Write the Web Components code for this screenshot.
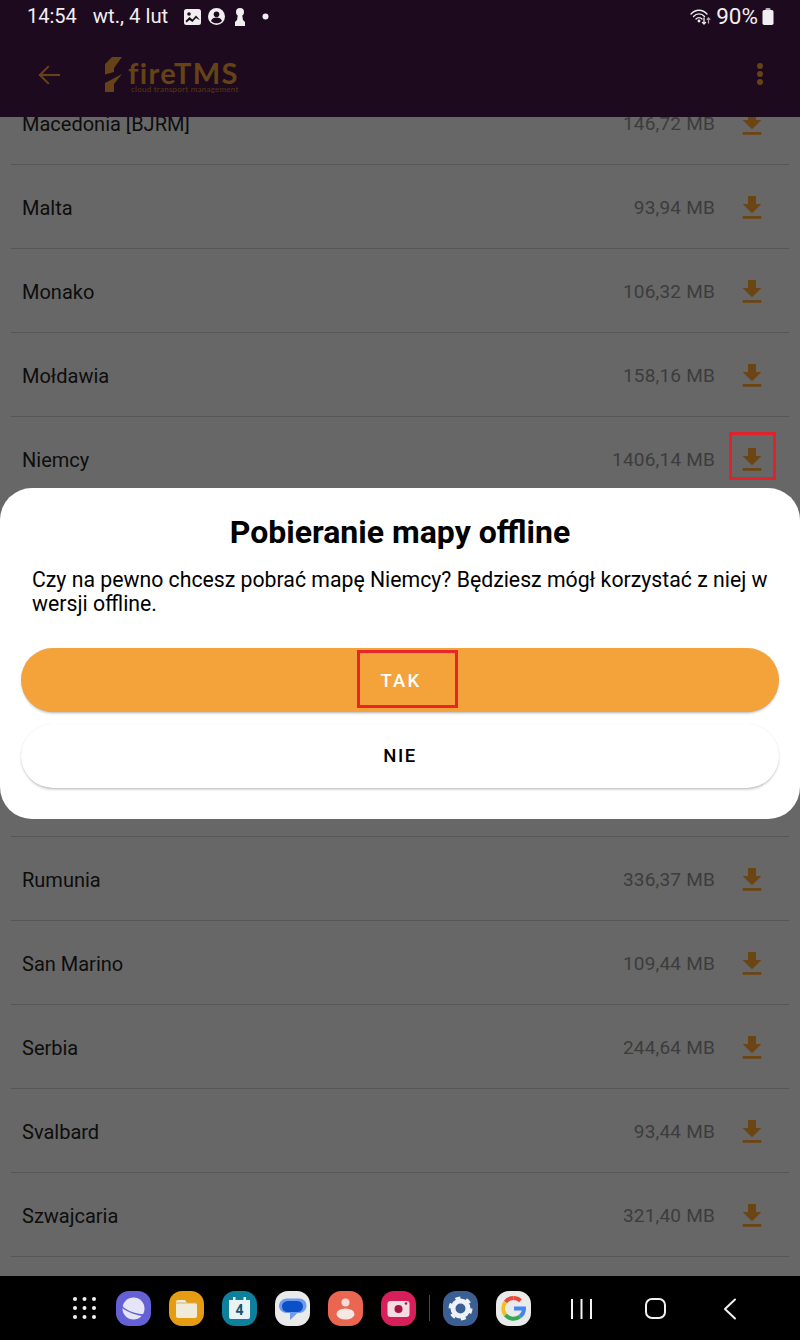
<!DOCTYPE html>
<html lang="pl">
<head>
<meta charset="utf-8">
<title>fireTMS</title>
<style>
    html, body { margin: 0; padding: 0; background: #676767; }
    body { font-family: 'Roboto', 'Liberation Sans', sans-serif; }
</style>
</head>
<body>
<phone-screen>
    <status-bar slot="top"></status-bar>
    <app-bar slot="top"></app-bar>

    <map-list>
        <map-row name="Macedonia [BJRM]" size="146,72 MB"></map-row>
        <map-row name="Malta" size="93,94 MB"></map-row>
        <map-row name="Monako" size="106,32 MB"></map-row>
        <map-row name="Mołdawia" size="158,16 MB"></map-row>
        <map-row name="Niemcy" size="1406,14 MB" marked></map-row>
        <map-row covered></map-row>
        <map-row covered></map-row>
        <map-row covered></map-row>
        <map-row covered></map-row>
        <map-row name="Rumunia" size="336,37 MB"></map-row>
        <map-row name="San Marino" size="109,44 MB"></map-row>
        <map-row name="Serbia" size="244,64 MB"></map-row>
        <map-row name="Svalbard" size="93,44 MB"></map-row>
        <map-row name="Szwajcaria" size="321,40 MB"></map-row>
    </map-list>

    <dock-bar slot="bottom"></dock-bar>

    <offline-dialog slot="overlay" heading="Pobieranie mapy offline">
        Czy na pewno chcesz pobrać mapę Niemcy? Będziesz mógł korzystać z niej w wersji offline.
        <sheet-button slot="actions" primary marked>TAK</sheet-button>
        <sheet-button slot="actions">NIE</sheet-button>
    </offline-dialog>
</phone-screen>

<script>
class PhoneScreen extends HTMLElement {
    constructor() {
        super();
        this.attachShadow({ mode: 'open' });
        this.shadowRoot.innerHTML = `
            <style>
                :host {
                    display: flex;
                    flex-direction: column;
                    position: relative;
                    width: 800px;
                    height: 1340px;
                    overflow: hidden;
                }
                .middle { flex: 1; min-height: 0; overflow: hidden; }
            </style>
            <slot name="top"></slot>
            <div class="middle"><slot></slot></div>
            <slot name="bottom"></slot>
            <slot name="overlay"></slot>
        `;
    }
}

class StatusBar extends HTMLElement {
    constructor() {
        super();
        this.attachShadow({ mode: 'open' });
        this.shadowRoot.innerHTML = `
            <style>
                :host {
                    display: flex;
                    align-items: center;
                    height: 33px;
                    padding: 0 27px;
                    background: #1e0a1e;
                    color: #f1eef1;
                    font: 400 20px/33px 'Roboto', sans-serif;
                }
                .date { margin-left: 16px; font-size: 20.300px; }
                .icons { display: flex; align-items: center; margin-left: 16px; }
                svg { display: block; }
                .right { margin-left: auto; display: flex; align-items: center; margin-right: -1px; }
                .pct { margin: 0 4px 0 5px; font-size: 22.500px; }
            </style>
            <span>14:54</span>
            <span class="date">wt., 4 lut</span>
            <div class="icons">
                <svg width="17" height="16" viewBox="0 0 17 16" fill="#f1eef1"><path d="M2.5 0h12A2.5 2.5 0 0 1 17 2.500v11a2.500 2.500 0 0 1-2.500 2.500h-12A2.500 2.500 0 0 1 0 13.500v-11A2.500 2.500 0 0 1 2.500 0z"/><circle cx="5" cy="5" r="1.800" fill="#1e0a1e"/><path d="M1.500 12l4-4 3 2.500 3.500-4 3.500 4V11l-3.500-2-3.500 4-3-2-3 2.500z" fill="#1e0a1e"/></svg>
                <svg style="margin-left:7px" width="17" height="17" viewBox="0 0 17 17"><circle cx="8.500" cy="8.500" r="8.500" fill="#f1eef1"/><circle cx="8.500" cy="6.300" r="2.800" fill="#1e0a1e"/><path d="M3 13c1-2.600 3-3.400 5.500-3.400S13 10.400 14 13c-1.400 1.500-3.400 2.300-5.500 2.300S4.400 14.500 3 13z" fill="#1e0a1e"/></svg>
                <svg style="margin-left:9px" width="12" height="18" viewBox="0 0 12 18" fill="#f1eef1"><circle cx="6" cy="4" r="4"/><path d="M4 6h4l1 6 2 2v4H1v-4l2-2z"/></svg>
                <svg style="margin-left:16px" width="7" height="7" viewBox="0 0 7 7"><circle cx="3.500" cy="3.500" r="3" fill="#f1eef1"/></svg>
            </div>
            <div class="right">
                <svg width="21" height="18" viewBox="0 0 21 18" fill="none" stroke="#f1eef1" stroke-width="1.300" stroke-linecap="round"><path d="M1 6c4.400-5 11.600-5 16 0"/><path d="M3.500 8.500c3-3.400 8-3.400 11 0"/><path d="M6 11c1.600-1.800 4.400-1.800 6 0"/><circle cx="9" cy="13" r=".8" fill="#f1eef1"/><path d="M14 10v6m-1.600-1.600L14 16l1.600-1.600"/><path d="M18.500 15V10m-1.300 1.300l1.300-1.300 1.300 1.300" stroke="#a9a3a9"/></svg>
                <span class="pct">90%</span>
                <svg width="12" height="17" viewBox="0 0 12 17" fill="#f1eef1"><rect x="3.500" y="0" width="5" height="2.500" rx="1" fill="#b7b2b7"/><rect x="0.500" y="2" width="11" height="15" rx="1.800"/></svg>
            </div>
        `;
    }
}

class AppBar extends HTMLElement {
    constructor() {
        super();
        this.attachShadow({ mode: 'open' });
        this.shadowRoot.innerHTML = `
            <style>
                :host {
                    display: flex;
                    align-items: center;
                    height: 84px;
                    padding: 0 36px 0 38px;
                    box-sizing: border-box;
                    background: #1e0a1e;
                    color: #654317;
                }
                svg { display: block; }
                .logo { display: flex; margin-left: 44px; }
                .words { margin-left: 5px; padding-top: 3px; display: flex; flex-direction: column; }
                .name {
                    font: 700 29px/26px 'Lato', sans-serif;
                    letter-spacing: 1.400px;
                }
                .tag {
                    font: 400 8px/9px 'Lato', sans-serif;
                    color: #553816;
                    margin: -1px 0 0 3px;
                    white-space: nowrap;
                    letter-spacing: .25px;
                }
                .more { margin-left: auto; margin-top: -2px; }
            </style>
            <svg width="22" height="20" viewBox="0 0 23 20" fill="none" stroke="#654317" stroke-width="2.200" stroke-linecap="square"><path d="M2 10h20"/><path d="M10.500 1.500L2 10l8.500 8.500"/></svg>
            <div class="logo">
                <svg width="19" height="37" viewBox="0 0 19 37" fill="#654317"><path d="M8 0h10L10 11v4l-9 2.500V7z"/><path d="M1 26l17-9-8 10v8H1z"/></svg>
                <div class="words">
                    <span class="name">fireTMS</span>
                    <span class="tag">cloud transport management</span>
                </div>
            </div>
            <svg class="more" width="8" height="24" viewBox="0 0 8 24" fill="#654317"><circle cx="4" cy="4" r="3"/><circle cx="4" cy="12" r="3"/><circle cx="4" cy="20" r="3"/></svg>
        `;
    }
}

class MapList extends HTMLElement {
    constructor() {
        super();
        this.attachShadow({ mode: 'open' });
        this.shadowRoot.innerHTML = `
            <style>
                :host { display: block; margin-top: -36px; background: #676767; }
            </style>
            <slot></slot>
        `;
    }
}

class MapRow extends HTMLElement {
    constructor() {
        super();
        this.attachShadow({ mode: 'open' });
    }

    connectedCallback() {
        const name = this.getAttribute('name') || '';
        const size = this.getAttribute('size') || '';
        const covered = this.hasAttribute('covered');
        this.shadowRoot.innerHTML = `
            <style>
                :host { display: block; padding: 0 11px; }
                .row {
                    display: flex;
                    align-items: center;
                    box-sizing: border-box;
                    height: 84px;
                    padding: 2px 11px 0;
                    border-bottom: 1px solid #565656;
                    font-size: 20px;
                    color: #0d0d0d;
                }
                .size { margin-left: auto; color: #3c3c3c; font-size: 19px; letter-spacing: .2px; }
                .icon {
                    position: relative;
                    width: 32px;
                    height: 32px;
                    margin: 0 10px 0 21px;
                }
                svg { display: block; }
                :host([marked]) .icon::after {
                    content: '';
                    position: absolute;
                    left: -7px;
                    top: -12px;
                    width: 41px;
                    height: 42px;
                    border: 3px solid #e0222a;
                }
            </style>
            <div class="row">
                ${covered ? '' : `
                <span>${name}</span>
                <span class="size">${size}</span>
                <span class="icon">
                    <svg width="32" height="32" viewBox="0 0 24 24" fill="#6b4514"><path d="M19 9h-4V3H9v6H5l7 7 7-7zM5 18v2h14v-2H5z"/></svg>
                </span>`}
            </div>
        `;
    }
}

class OfflineDialog extends HTMLElement {
    constructor() {
        super();
        this.attachShadow({ mode: 'open' });
    }

    connectedCallback() {
        this.shadowRoot.innerHTML = `
            <style>
                :host {
                    display: block;
                    position: absolute;
                    left: 0;
                    right: 0;
                    top: 488px;
                    height: 331px;
                    box-sizing: border-box;
                    padding: 26px 21px 0;
                    background: #fff;
                    border-radius: 32px;
                    color: #000;
                }
                h2 {
                    margin: 0;
                    text-align: center;
                    font: 700 32px/36px 'Roboto', sans-serif;
                }
                p {
                    margin: 18px 0 0 11px;
                    font: 400 21.250px/24px 'Roboto', sans-serif;
                }
                .actions { display: flex; flex-direction: column; gap: 12px; margin-top: 32px; }
            </style>
            <h2>${this.getAttribute('heading')}</h2>
            <p><slot></slot></p>
            <div class="actions"><slot name="actions"></slot></div>
        `;
    }
}

class SheetButton extends HTMLElement {
    constructor() {
        super();
        this.attachShadow({ mode: 'open' });
        this.shadowRoot.innerHTML = `
            <style>
                :host {
                    display: flex;
                    align-items: center;
                    justify-content: center;
                    position: relative;
                    box-sizing: border-box;
                    height: 64px;
                    padding-top: 1px;
                    border-radius: 32px;
                    background: #fff;
                    color: #000;
                    font: 500 18.500px/1 'Roboto', sans-serif;
                    letter-spacing: 1.600px;
                    box-shadow: 0 2px 3px -1px rgba(0,0,0,.3), 0 0 1px rgba(0,0,0,.12);
                }
                :host([primary]) { background: #f4a33b; color: #fff; letter-spacing: 2.200px; padding-left: 2px; padding-top: 2px; }
                :host([marked])::after {
                    content: '';
                    position: absolute;
                    left: 336px;
                    top: 2px;
                    width: 95px;
                    height: 52px;
                    border: 3px solid #e8262a;
                }
            </style>
            <slot></slot>
        `;
    }
}

const DOCK_ICONS = {
    internet: `<rect width="35" height="35" rx="13" fill="#6461d6"/><circle cx="17.500" cy="17.500" r="11" fill="#e6e4f7"/><path d="M3.500 12c5 7 16 12 28 11-1 2-3 2-5 2-9-1-19-6-24-11z" fill="#6461d6"/>`,
    files: `<rect width="35" height="35" rx="13" fill="#e59c12"/><path d="M7 11a2 2 0 0 1 2-2h7l2 3h8a2 2 0 0 1 2 2v11a2 2 0 0 1-2 2H9a2 2 0 0 1-2-2z" fill="#f0ead9"/><path d="M7 12h21" stroke="#dcb35e" stroke-width="1"/>`,
    calendar: `<rect width="35" height="35" rx="13" fill="#0e7f9d"/><path d="M7 9h21v17a2 2 0 0 1-2 2H9a2 2 0 0 1-2-2z" fill="#e9f2f4"/><rect x="11" y="6" width="2.500" height="5" fill="#e9f2f4"/><rect x="21.500" y="6" width="2.500" height="5" fill="#e9f2f4"/>`,
    messages: `<rect width="35" height="35" rx="13" fill="#eaeaea"/><path d="M13 4.500h12c4.500 0 7.500 3 7.500 7s-3 7.500-7.500 7.500h-1.500L16 26v-7h-3c-4.500 0-8-3-8-7s3.500-7.500 8-7.500z" fill="#6c9bf0" transform="translate(-1,3)"/><rect x="7" y="10" width="21" height="11" rx="5.500" fill="#0c50c8"/>`,
    contacts: `<rect width="35" height="35" rx="13" fill="#ea6650"/><circle cx="17.500" cy="11.500" r="4" fill="#f7dbd4"/><ellipse cx="17.500" cy="23" rx="9" ry="5.500" fill="#f7e7e2"/>`,
    camera: `<rect width="35" height="35" rx="13" fill="#d91f5b"/><rect x="6.500" y="10" width="22" height="16" rx="3" fill="#f5dce4"/><circle cx="17.500" cy="18" r="4" fill="#a31644"/><circle cx="25" cy="12.500" r="1.300" fill="#a31644"/>`,
    settings: `<rect width="35" height="35" rx="13" fill="#3b5f92"/><circle cx="17.500" cy="17.500" r="7.500" fill="none" stroke="#eef1f6" stroke-width="5"/><circle cx="17.500" cy="17.500" r="10.500" fill="none" stroke="#eef1f6" stroke-width="3" stroke-dasharray="5 6"/>`,
    google: `<rect width="35" height="35" rx="13" fill="#eaeaea"/>
        <path d="M17.500 7a10.500 10.500 0 0 1 7 2.700" fill="none" stroke="#e8483a" stroke-width="4"/>
        <path d="M9.500 11A10.500 10.500 0 0 1 17.500 7" fill="none" stroke="#e8483a" stroke-width="4"/>
        <path d="M9.500 11a10.500 10.500 0 0 0 0 13" fill="none" stroke="#f4c020" stroke-width="4"/>
        <path d="M9.500 24a10.500 10.500 0 0 0 14.500 1.500" fill="none" stroke="#34a853" stroke-width="4"/>
        <path d="M24 25.500c2.500-2 4-4.800 4-8H18" fill="none" stroke="#4285f4" stroke-width="4"/>`
};

class DockBar extends HTMLElement {
    constructor() {
        super();
        this.attachShadow({ mode: 'open' });
        const appIcon = (key, label) => `
            <span class="app">
                <svg width="35" height="35" viewBox="0 0 35 35">${DOCK_ICONS[key]}</svg>
                ${label ? `<b>${label}</b>` : ''}
            </span>`;
        let dots = '';
        for (let r = 0; r < 3; r++) {
            for (let c = 0; c < 3; c++) {
                dots += `<circle cx="${2 + c * 9.500}" cy="${2 + r * 9}" r="2"/>`;
            }
        }
        this.shadowRoot.innerHTML = `
            <style>
                :host {
                    display: flex;
                    align-items: center;
                    height: 64px;
                    padding: 0 0 0 73px;
                    box-sizing: border-box;
                    background: #000;
                }
                svg { display: block; }
                .apps { display: flex; align-items: center; gap: 18px; margin-left: 20px; }
                .app { position: relative; display: block; width: 35px; height: 35px; }
                .app b {
                    position: absolute;
                    left: 0;
                    right: 0;
                    top: 11px;
                    text-align: center;
                    font: 700 14px/16px 'Roboto', sans-serif;
                    color: #14566e;
                }
                .divider { width: 1px; height: 26px; background: #4a4a4a; margin: 0 -5px; }
                .keys { display: flex; align-items: center; margin: 1px 0 0 40px; }
            </style>
            <svg width="23" height="22" viewBox="0 0 23 22" fill="#f2f2f2">${dots}</svg>
            <div class="apps">
                ${appIcon('internet')}
                ${appIcon('files')}
                ${appIcon('calendar', '4')}
                ${appIcon('messages')}
                ${appIcon('contacts')}
                ${appIcon('camera')}
                <span class="divider"></span>
                ${appIcon('settings')}
                ${appIcon('google')}
            </div>
            <div class="keys">
                <svg width="21" height="20" viewBox="0 0 21 20" stroke="#f2f2f2" stroke-width="2"><path d="M1 0v20M10.500 0v20M20 0v20"/></svg>
                <svg style="margin-left:53px" width="22" height="21" viewBox="0 0 22 21" fill="none" stroke="#f2f2f2" stroke-width="2"><rect x="1" y="1" width="19" height="19" rx="6"/></svg>
                <svg style="margin-left:56px" width="14" height="22" viewBox="0 0 14 22" fill="none" stroke="#f2f2f2" stroke-width="2" stroke-linecap="round" stroke-linejoin="round"><path d="M12 1.500L2 11l10 9.500"/></svg>
            </div>
        `;
    }
}

customElements.define('phone-screen', PhoneScreen);
customElements.define('status-bar', StatusBar);
customElements.define('app-bar', AppBar);
customElements.define('map-list', MapList);
customElements.define('map-row', MapRow);
customElements.define('offline-dialog', OfflineDialog);
customElements.define('sheet-button', SheetButton);
customElements.define('dock-bar', DockBar);
</script>
</body>
</html>
